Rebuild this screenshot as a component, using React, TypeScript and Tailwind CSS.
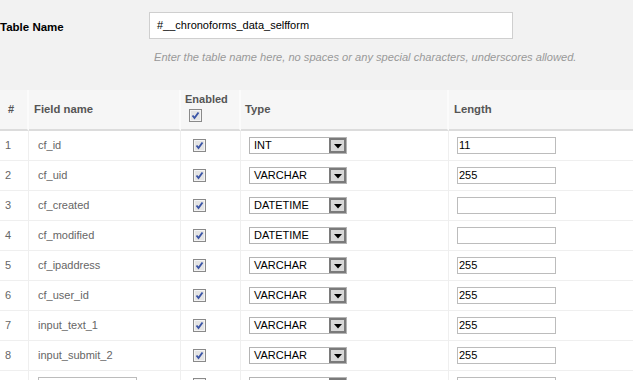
const rows = [
  { name: 'cf_id', type: 'INT', length: '11' },
  { name: 'cf_uid', type: 'VARCHAR', length: '255' },
  { name: 'cf_created', type: 'DATETIME', length: '' },
  { name: 'cf_modified', type: 'DATETIME', length: '' },
  { name: 'cf_ipaddress', type: 'VARCHAR', length: '255' },
  { name: 'cf_user_id', type: 'VARCHAR', length: '255' },
  { name: 'input_text_1', type: 'VARCHAR', length: '255' },
  { name: 'input_submit_2', type: 'VARCHAR', length: '255' },
];

function Check() {
  return (
    <svg width="13" height="13" viewBox="0 0 13 13" className="block">
      <rect x="0.5" y="0.5" width="12" height="12" fill="#e4e4e4" stroke="#8a8a8a" />
      <rect x="1.5" y="1.5" width="10" height="10" fill="none" stroke="#f4f4f4" />
      <path d="M3.5 6.5 L5.5 9 L9.5 3.5" fill="none" stroke="#3b55a6" strokeWidth="1.9" />
    </svg>
  );
}

function Select({ value }: { value: string }) {
  return (
    <div className="flex h-[17px] w-[98px] items-center border border-[#b4b4b4] bg-white">
      <span className="flex-1 pl-[4px] text-[11px] leading-none text-black">{value}</span>
      <span className="flex h-[15px] w-[17px] items-end justify-center border-2 border-[#7a7a7a] bg-[#d8d8d8] pb-[2px]">
        <svg width="8" height="5" viewBox="0 0 8 5" className="block">
          <path d="M0 0 H8 L4 4.5 Z" fill="#000" />
        </svg>
      </span>
    </div>
  );
}

export default function App() {
  return (
    <div className="h-[380px] w-[633px] overflow-hidden bg-[#f2f2f2] font-['Liberation_Sans',Arial,sans-serif]">
      <div className="flex items-center pt-3">
        <div className="w-[149px] pt-[4px] text-[11.5px] font-bold text-black">Table Name</div>
        <div className="flex h-[27px] w-[364px] items-center border border-[#cfcfcf] bg-white pl-[7px] text-[11px] text-black">
          #__chronoforms_data_selfform
        </div>
      </div>
      <div className="mt-[12px] pl-[154px] text-[11.1px] italic leading-[13px] text-[#999]">
        Enter the table name here, no spaces or any special characters, underscores allowed.
      </div>

      <div className="mt-[26px] grid grid-cols-[29px_152px_60px_208px_1fr] text-[11px]">
        <div className="flex h-[41px] items-center border-r-2 border-b-2 border-r-[#fbfbfb] border-b-[#dcdcdc] bg-[#f6f6f6] pl-[8px] font-bold text-[#555]">#</div>
        <div className="flex h-[41px] items-center border-r-2 border-b-2 border-r-[#fbfbfb] border-b-[#dcdcdc] bg-[#f6f6f6] pl-[5px] text-[11.3px] font-bold text-[#555]">Field name</div>
        <div className="flex h-[41px] flex-col border-r-2 border-b-2 border-r-[#fbfbfb] border-b-[#dcdcdc] bg-[#f6f6f6] pl-[4px] pt-[3px] font-bold text-[#555]">
          <span className="leading-[13px]">Enabled</span>
          <span className="mt-[3px] pl-[4px]"><Check /></span>
        </div>
        <div className="flex h-[41px] items-center border-r-2 border-b-2 border-r-[#fbfbfb] border-b-[#dcdcdc] bg-[#f6f6f6] pl-[4px] text-[11.3px] font-bold text-[#555]">Type</div>
        <div className="flex h-[41px] items-center border-b-2 border-b-[#dcdcdc] bg-[#f6f6f6] pl-[5px] text-[11.3px] font-bold text-[#555]">Length</div>

        {rows.map((r, i) => (
          <div key={r.name} className="contents">
            <div className="flex h-[30px] items-center border-r border-b border-[#efefef] bg-white pl-[5px] text-[#666]">{i + 1}</div>
            <div className="flex h-[30px] items-center border-r border-b border-[#efefef] bg-white pl-[9px] text-[#666]">{r.name}</div>
            <div className="flex h-[30px] items-center border-r border-b border-[#efefef] bg-white pl-[12px]"><Check /></div>
            <div className="flex h-[30px] items-center border-r border-b border-[#efefef] bg-white pl-[8px]"><Select value={r.type} /></div>
            <div className="flex h-[30px] items-center border-b border-[#efefef] bg-white pl-[8px]">
              <div className="flex h-[17px] w-[99px] items-center border border-[#bcbcbc] bg-white pl-[1px] text-[11px] text-black">{r.length}</div>
            </div>
          </div>
        ))}

        <div className="h-[30px] border-r border-[#efefef] bg-white" />
        <div className="flex h-[30px] items-start border-r border-[#efefef] bg-white pl-[9px] pt-[6px]">
          <div className="h-[17px] w-[99px] border border-[#bcbcbc] bg-white" />
        </div>
        <div className="flex h-[30px] items-start border-r border-[#efefef] bg-white pl-[12px] pt-[7px]"><Check /></div>
        <div className="flex h-[30px] items-start border-r border-[#efefef] bg-white pl-[8px] pt-[6px]"><Select value="" /></div>
        <div className="flex h-[30px] items-start bg-white pl-[8px] pt-[6px]">
          <div className="h-[17px] w-[99px] border border-[#bcbcbc] bg-white" />
        </div>
      </div>
    </div>
  );
}
